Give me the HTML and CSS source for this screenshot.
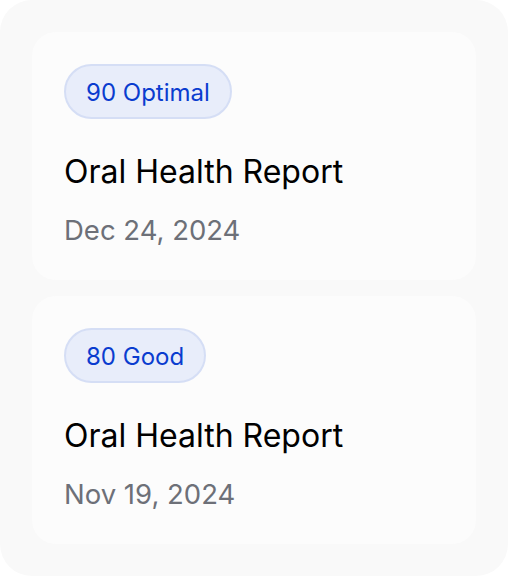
FILE: index.html
```html
<!DOCTYPE html>
<html lang="en">
<head>
  <meta charset="UTF-8" />
  <meta name="viewport" content="width=device-width, initial-scale=1.0" />
  <title>Reports</title>
  <link rel="stylesheet" href="styles.css">
</head>
<body>
  <div class="report-list">
    <div class="report-card">
      <span class="score-badge">90 Optimal</span>
      <p class="report-title">Oral Health Report</p>
      <p class="report-date">Dec 24, 2024</p>
    </div>
    <div class="report-card">
      <span class="score-badge">80 Good</span>
      <p class="report-title">Oral Health Report</p>
      <p class="report-date">Nov 19, 2024</p>
    </div>
  </div>
</body>
</html>
```

FILE: styles.css
```css
body {
  font-family: Inter, "Noto Sans", sans-serif;
  background-color: #fff;
  margin: 0;
}
.report-list {
  width: 508px;
  height: 576px;
  box-sizing: border-box;
  background-color: #f9f9f9;
  border-radius: 32px;
  padding: 32px;
  display: flex;
  flex-direction: column;
  gap: 16px;
}
.report-card {
  background-color: #fcfcfc;
  border-radius: 24px;
  padding: 32px;
  height: 248px;
  box-sizing: border-box;
  display: flex;
  flex-direction: column;
  align-items: flex-start;
}
.score-badge {
  display: inline-flex;
  align-items: center;
  height: 57px;
  box-sizing: border-box;
  padding: 1px 20px 0;
  border: 2px solid #d5def5;
  border-radius: 999px;
  background-color: #e8edfa;
  color: #0a3ccf;
  font-size: 24px;
}
.report-title {
  margin: 33px 0 0;
  font-size: 32px;
  line-height: 40px;
  color: #000;
}
.report-date {
  margin: 20px 0 0;
  font-size: 27.5px;
  line-height: 36px;
  color: #6d7078;
}
```
